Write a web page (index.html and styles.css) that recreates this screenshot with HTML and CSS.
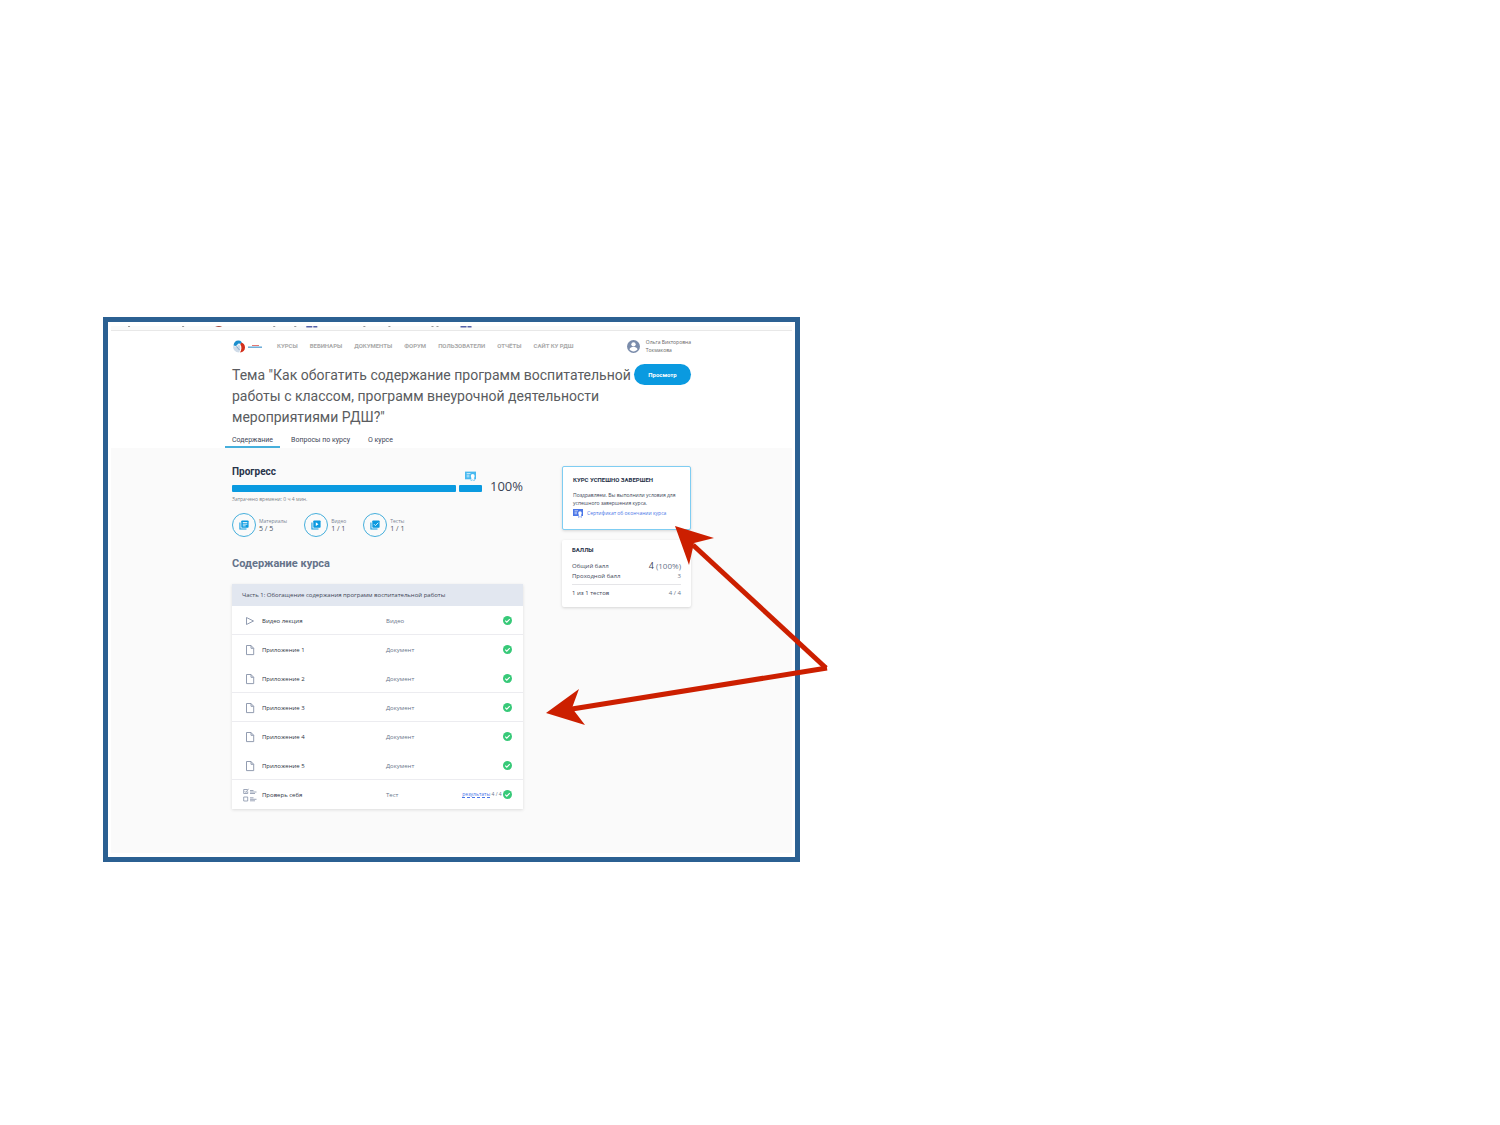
FILE: index.html
```html
<!DOCTYPE html>
<html lang="ru">
<head>
  <meta charset="UTF-8">
  <meta name="viewport" content="width=device-width, initial-scale=1">
  <title>Как обогатить содержание программ</title>
  <link rel="stylesheet" href="styles.css">
</head>
<body>
  <!-- общие иконки -->
  <svg class="sprite" aria-hidden="true">
    <symbol id="doc" viewBox="0 0 10 12">
      <path d="M1.5 1.5H6L8.7 4.3V10.6H1.5ZM6 1.5V4.3H8.7" fill="none" stroke="#8792a8" stroke-width=".9"/>
    </symbol>
    <symbol id="done" viewBox="0 0 24 24">
      <circle cx="12" cy="12" r="12" fill="#37c978"/>
      <path d="M6 12.5l4 4 8-8" fill="none" stroke="#fff" stroke-width="3"/>
    </symbol>
    <symbol id="cert" viewBox="0 0 20 18">
      <path d="M0 1h20v14H0z" fill="currentColor"/>
      <path d="M3 4.5h7M3 7.5h5M3 10.5h5" stroke="#fff" stroke-width="1.2"/>
      <path d="M11 10v8l3-2 3 2v-8" fill="#fff" stroke="currentColor"/>
      <circle cx="14" cy="9" r="3.5" fill="#fff"/>
    </symbol>
  </svg>

  <div class="frame">
    <svg class="bookmarks" viewBox="0 0 680 4" preserveAspectRatio="xMinYMin slice" aria-hidden="true">
      <path d="M17 0h2M71 0h2M162 0h2M183 0h2M252 0h2M277 0h2M320 0h2M325 0h2" stroke="#999" stroke-width="2"/>
      <path d="M104 0h7q-3 2-7 0" fill="#a5483c"/>
      <path d="M195 .5h6M202 .5h4M349 .5h6M356 .5h4" stroke="#5561a8" stroke-width="2"/>
    </svg>

    <header class="header">
      <div class="topbar">
        <a class="logo" href="#" aria-label="Корпоративный университет РДШ">
          <svg viewBox="0 0 30 13" aria-hidden="true">
            <path d="M1.5 5.5C2 2 4 .3 6.5 .5 9 .6 10 2.2 10 4L6.5 3.5 4 6z" fill="#1c8fce"/>
            <path d="M9.5 2.5c2 .5 3.5 2.5 3.5 5 0 3-2 4.7-5 5 1.7-2.5 2-6 .3-8z" fill="#d3301c"/>
            <path d="M1.2 6c-.5 3.5 2 6.3 6 6.5C9 9 8.5 6 7 4.2 5.5 6 3.5 7 1.2 6z" fill="#cfdbe8"/>
            <path d="M4.5 6.5l3 3.5" stroke="#6f9dc4" stroke-width=".8"/>
            <path d="M20 5.5h7" stroke="#e37873"/>
            <path d="M16 7.2h14" stroke="#62a6d5" stroke-width="1.4"/>
          </svg>
        </a>
        <nav class="nav">
          <a href="#">КУРСЫ</a>
          <a href="#">ВЕБИНАРЫ</a>
          <a href="#">ДОКУМЕНТЫ</a>
          <a href="#">ФОРУМ</a>
          <a href="#">ПОЛЬЗОВАТЕЛИ</a>
          <a href="#">ОТЧЁТЫ</a>
          <a href="#">САЙТ КУ РДШ</a>
        </nav>
        <a class="user" href="#">
          <svg class="avatar" viewBox="0 0 24 24" aria-hidden="true">
            <circle cx="12" cy="12" r="12" fill="#7a8cab"/>
            <circle cx="12" cy="8" r="4" fill="#fff"/>
            <path d="M4.5 17c1-3 4-4 7.5-4s6.5 1 7.5 4c-2 2.5-4.5 4-7.5 4s-5.5-1.5-7.5-4z" fill="#fff"/>
          </svg>
          <span>Ольга Викторовна<br>Токмакова</span>
        </a>
      </div>

      <div class="title-row">
        <h1>Тема "Как обогатить содержание программ воспитательной работы с классом, программ внеурочной деятельности мероприятиями РДШ?"</h1>
        <button class="view-button" type="button">Просмотр</button>
      </div>

      <nav class="tabs">
        <a class="active" href="#">Содержание</a>
        <a href="#">Вопросы по курсу</a>
        <a href="#">О курсе</a>
      </nav>
    </header>

    <main class="content">
      <section class="course">
        <h2>Прогресс</h2>
        <div class="progress">
          <div class="bar"></div>
          <div class="bar bar-last">
            <svg class="bar-cert" aria-hidden="true"><use href="#cert"/></svg>
          </div>
          <span class="percent">100%</span>
        </div>
        <p class="time">Затрачено времени: 0 ч 4 мин.</p>

        <ul class="stats">
          <li>
            <span class="circle">
              <svg viewBox="0 0 24 24" aria-hidden="true">
                <path d="M1 6v17h17v-2.5H3.5V6z" fill="#0a9ae0"/>
                <rect x="5.5" y="1" width="17.5" height="17.5" rx="2" fill="#0a9ae0"/>
                <path d="M9 6h11M9 10h11M9 14h7" stroke="#fff" stroke-width="2"/>
              </svg>
            </span>
            <span class="stat-text">Материалы<b>5 / 5</b></span>
          </li>
          <li>
            <span class="circle">
              <svg viewBox="0 0 24 24" aria-hidden="true">
                <path d="M1 6v17h17v-2.5H3.5V6z" fill="#0a9ae0"/>
                <rect x="5.5" y="1" width="17.5" height="17.5" rx="2" fill="#0a9ae0"/>
                <path d="M11.5 5.5v9l6.5-4.5z" fill="#fff"/>
              </svg>
            </span>
            <span class="stat-text">Видео<b>1 / 1</b></span>
          </li>
          <li>
            <span class="circle">
              <svg viewBox="0 0 24 24" aria-hidden="true">
                <path d="M1 6v17h17v-2.5H3.5V6z" fill="#0a9ae0"/>
                <rect x="5.5" y="1" width="17.5" height="17.5" rx="2" fill="#0a9ae0"/>
                <path d="M9.5 10l3.5 3.5 7-7" fill="none" stroke="#fff" stroke-width="2"/>
              </svg>
            </span>
            <span class="stat-text">Тесты<b>1 / 1</b></span>
          </li>
        </ul>

        <h2 class="contents-title">Содержание курса</h2>
        <table class="lessons">
          <thead>
            <tr><th colspan="4">Часть 1: Обогащение содержания программ воспитательной работы</th></tr>
          </thead>
          <tbody>
            <tr class="line">
              <td class="icon"><svg viewBox="0 0 10 12" aria-hidden="true"><path d="M1.5 2.5v7L8.5 6z" fill="none" stroke="#8792a8" stroke-width=".9"/></svg></td>
              <td class="name">Видео лекция</td><td class="type">Видео</td>
              <td class="status"><svg class="done"><use href="#done"/></svg></td>
            </tr>
            <tr>
              <td class="icon"><svg><use href="#doc"/></svg></td>
              <td class="name">Приложение 1</td><td class="type">Документ</td>
              <td class="status"><svg class="done"><use href="#done"/></svg></td>
            </tr>
            <tr class="line">
              <td class="icon"><svg><use href="#doc"/></svg></td>
              <td class="name">Приложение 2</td><td class="type">Документ</td>
              <td class="status"><svg class="done"><use href="#done"/></svg></td>
            </tr>
            <tr class="line">
              <td class="icon"><svg><use href="#doc"/></svg></td>
              <td class="name">Приложение 3</td><td class="type">Документ</td>
              <td class="status"><svg class="done"><use href="#done"/></svg></td>
            </tr>
            <tr>
              <td class="icon"><svg><use href="#doc"/></svg></td>
              <td class="name">Приложение 4</td><td class="type">Документ</td>
              <td class="status"><svg class="done"><use href="#done"/></svg></td>
            </tr>
            <tr class="line">
              <td class="icon"><svg><use href="#doc"/></svg></td>
              <td class="name">Приложение 5</td><td class="type">Документ</td>
              <td class="status"><svg class="done"><use href="#done"/></svg></td>
            </tr>
            <tr>
              <td class="icon"><svg class="test" viewBox="0 0 14 14" aria-hidden="true"><path d="M4.5 1.5H.7v4h4V3.5M1.7 3.2l1.2 1.3L5.5 .8M.7 9h4v4h-4zM7 2.5h3.5M7 4h6.5M7 5.5h5M7 9.8h3.5M7 11.3h6.5M7 12.8h5" fill="none" stroke="#8792a8" stroke-width=".8"/></svg></td>
              <td class="name">Проверь себя</td><td class="type">Тест</td>
              <td class="status"><a href="#">результаты</a> 4 / 4 <svg class="done"><use href="#done"/></svg></td>
            </tr>
          </tbody>
        </table>
      </section>

      <aside class="side">
        <div class="card card-done">
          <h3>КУРС УСПЕШНО ЗАВЕРШЕН</h3>
          <p>Поздравляем. Вы выполнили условия для успешного завершения курса.</p>
          <a class="cert-link" href="#">
            <svg aria-hidden="true"><use href="#cert"/></svg>Сертификат об окончании курса
          </a>
        </div>
        <div class="card">
          <h3>БАЛЛЫ</h3>
          <dl class="scores">
            <div><dt>Общий балл</dt><dd class="total"><b>4</b> (100%)</dd></div>
            <div><dt>Проходной балл</dt><dd>3</dd></div>
            <div class="tests"><dt>1 из 1 тестов</dt><dd>4 / 4</dd></div>
          </dl>
        </div>
      </aside>
    </main>

    <!-- стрелки поверх рамки -->
    <svg class="arrows" viewBox="0 0 290 210" aria-hidden="true">
      <path d="M153 28L286 151" stroke="#cc1f00" stroke-width="5"/>
      <path d="M287 151L32 192" stroke="#cc1f00" stroke-width="5"/>
      <path d="M135 9l39 12-20 5-5 22z" fill="#cc1f00"/>
      <path d="M6 196l33-24-7 19 13 17z" fill="#cc1f00"/>
    </svg>
  </div>
</body>
</html>
```

FILE: styles.css
```css
* {
  box-sizing: border-box;
  margin: 0;
  padding: 0;
}

body {
  background: #fff;
  color: #3c4556;
  font-family: 'Open Sans', 'Noto Sans', sans-serif;
  font-size: 6px;
  line-height: 8px;
  padding: 317px 103px 40px;
}

a {
  color: inherit;
  text-decoration: none;
}

.sprite {
  display: none;
}

.frame {
  position: relative;
  width: 100%;
  max-width: 697px;
  padding: 4px 3px;
  border: 5px solid #2b6092;
}

.bookmarks {
  display: block;
  width: 100%;
  height: 5px;
  background: #fafafa;
  border-bottom: 1px solid #e8e8e8;
}

/* Шапка */
.header {
  padding: 0 101px 0 121px;
}

.topbar {
  display: flex;
  align-items: center;
  height: 30px;
}

.logo svg {
  display: block;
  width: 30px;
  height: 13px;
}

.nav {
  display: flex;
  gap: 12px;
  margin-left: 15px;
  color: #a9a9a9;
  font-family: Roboto, sans-serif;
  font-weight: 700;
}

.user {
  display: flex;
  align-items: center;
  gap: 6px;
  margin-left: auto;
  color: #666;
  font-size: 5px;
}

.avatar {
  width: 13px;
  height: 13px;
}

.title-row {
  display: flex;
  align-items: flex-start;
  margin-top: 3px;
}

h1 {
  flex: 1;
  padding-top: 1px;
  color: #5a5c60;
  font-family: Roboto, sans-serif;
  font-size: 14px;
  font-weight: 400;
  line-height: 21px;
}

.view-button {
  width: 57px;
  height: 21px;
  border: none;
  border-radius: 11px;
  background: #0a9ae0;
  color: #fff;
  font-family: Roboto, sans-serif;
  font-size: 6px;
  font-weight: 700;
  cursor: pointer;
}

.tabs {
  display: flex;
  gap: 4px;
  margin: 4px 0 0 -7px;
  font-family: Roboto, sans-serif;
  font-size: 7px;
  line-height: 12px;
}

.tabs a {
  padding: 2px 7px 0;
  border-bottom: 2px solid transparent;
}

.tabs .active {
  border-color: #46afdc;
}

/* Основная часть */
.content {
  display: grid;
  grid-template-columns: 1fr 129px;
  gap: 39px;
  align-items: start;
  padding: 18px 101px 44px 121px;
  background: #fafafa;
}

h2 {
  color: #28334a;
  font-family: Roboto, sans-serif;
  font-size: 10px;
  font-weight: 700;
  line-height: 12px;
}

.progress {
  display: flex;
  align-items: center;
  gap: 3px;
  height: 15px;
  margin-top: 3px;
}

.bar {
  flex: 1;
  height: 7px;
  border-radius: 1px;
  background: #0a9ae0;
}

.bar-last {
  position: relative;
  flex: none;
  width: 23px;
}

.bar-cert {
  position: absolute;
  bottom: 11px;
  left: 6px;
  width: 11px;
  height: 10px;
  color: #48b9f0;
}

.percent {
  padding: 0 0 4px 5px;
  font-size: 13px;
  line-height: 15px;
}

.time {
  color: #7b7f86;
  font-size: 5px;
  line-height: 7px;
}

.stats {
  display: flex;
  gap: 17px;
  margin-top: 10px;
  list-style: none;
}

.stats li {
  display: flex;
  align-items: center;
  gap: 3px;
}

.circle {
  display: flex;
  align-items: center;
  justify-content: center;
  width: 24px;
  height: 24px;
  border: 1px solid #46afdc;
  border-radius: 50%;
}

.circle svg {
  width: 10px;
  height: 10px;
}

.stat-text {
  color: #7b8494;
  font-size: 5px;
}

.stat-text b {
  display: block;
  color: #4b5362;
  font-size: 7px;
  font-weight: 400;
}

.contents-title {
  margin-top: 21px;
  color: #65738a;
  font-size: 11px;
}

.lessons {
  width: 100%;
  margin-top: 14px;
  border-collapse: collapse;
  background: #fff;
  box-shadow: 0 1px 3px rgba(0, 0, 0, 0.12);
}

.lessons th {
  height: 22px;
  padding-left: 10px;
  background: #e2e7f0;
  font-weight: 400;
  text-align: left;
}

.lessons td {
  height: 29px;
  vertical-align: middle;
}

.lessons .line {
  box-shadow: inset 0 -1px #ececf0;
}

.icon {
  width: 30px;
  padding-left: 5px;
  text-align: center;
}

.icon svg {
  display: block;
  width: 10px;
  height: 12px;
  margin: 0 auto;
}

.icon .test {
  width: 14px;
  height: 14px;
}

.name {
  width: 124px;
  color: #2d3442;
}

.type {
  color: #69758a;
}

.status {
  padding-right: 11px;
  color: #69758a;
  font-size: 5px;
  text-align: right;
}

.status a {
  border-bottom: 1px dashed #4a76e8;
  color: #4a76e8;
}

.done {
  width: 9px;
  height: 9px;
  vertical-align: middle;
}

/* Правая колонка */
.side {
  display: grid;
  gap: 10px;
}

.card {
  padding: 6px 10px 9px;
  border-radius: 2px;
  background: #fff;
  box-shadow: 0 1px 3px rgba(0, 0, 0, 0.15);
}

.card-done {
  padding: 9px 10px 11px;
  border: 1px solid #7fcdf2;
}

.card h3 {
  color: #28334a;
  font-family: Roboto, sans-serif;
  font-size: 6px;
  font-weight: 700;
}

.card p {
  margin-top: 7px;
  font-size: 5px;
}

.cert-link {
  display: flex;
  align-items: center;
  gap: 4px;
  margin-top: 1px;
  color: #4a76e8;
  font-size: 5px;
}

.cert-link svg {
  width: 10px;
  height: 10px;
}

.scores {
  margin-top: 7px;
  line-height: 10px;
}

.scores div {
  display: flex;
  justify-content: space-between;
}

.scores dd {
  color: #69758a;
}

.scores .total {
  font-size: 8px;
}

.total b {
  color: #3c4556;
  font-size: 9px;
  font-weight: 400;
}

.scores .tests {
  margin-top: 3px;
  padding-top: 3px;
  border-top: 1px solid #e5e5e8;
}

.arrows {
  position: absolute;
  top: 195px;
  left: 432px;
  width: 290px;
  height: 210px;
}
```
